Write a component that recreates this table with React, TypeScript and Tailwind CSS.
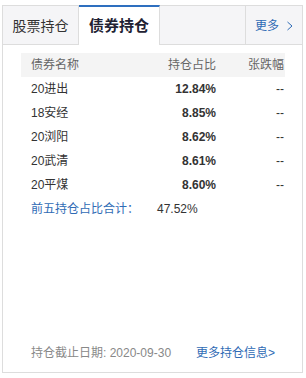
const rows = [
  { name: "20进出", ratio: "12.84%" },
  { name: "18安经", ratio: "8.85%" },
  { name: "20浏阳", ratio: "8.62%" },
  { name: "20武清", ratio: "8.61%" },
  { name: "20平煤", ratio: "8.60%" },
];

const font = {
  fontFamily: '"Liberation Sans", Arial, "Noto Sans CJK SC", sans-serif',
};

export default function App() {
  return (
    <div className="w-[306px] h-[378px] bg-white pt-[5px] pl-[2px]" style={font}>
      <div className="w-[301px] h-[368px] border border-[#dddddd] flex flex-col">
        {/* tabs */}
        <div className="flex h-[39px] shrink-0">
          <div className="w-[76px] bg-[#f5f5f7] border-r border-b border-[#dddddd] flex items-center justify-center pt-[2px] text-[14px] text-[#333333]">
            股票持仓
          </div>
          <div className="w-[81px] -mt-px bg-white border-t-2 border-t-[#2e6fbf] border-r border-r-[#dddddd] flex items-center justify-center text-[15px] font-bold text-[#222233]">
            债券持仓
          </div>
          <div className="w-[86px] bg-[#f5f5f7] border-r border-b border-[#dddddd]" />
          <div className="flex-1 bg-[#f5f5f7] border-b border-[#dddddd] flex items-center justify-center gap-[8px] pt-[1px] text-[12px] text-[#2f6bb5]">
            <span>更多</span>
            <svg width="6" height="10" viewBox="0 0 6 10" className="mt-px">
              <path d="M0.5 1 L5 5 L0.5 9" fill="none" stroke="#2f6bb5" strokeWidth="1" />
            </svg>
          </div>
        </div>

        {/* table */}
        <div className="ml-[18px] mt-[8px] w-[264px] text-[12px]">
          <div className="flex h-[24px] items-center bg-[#f4f4f4] text-[#666666]">
            <div className="w-[130px] pl-[10px]">债券名称</div>
            <div className="w-[65px] text-right">持仓占比</div>
            <div className="flex-1 text-right pr-px whitespace-nowrap overflow-hidden">张跌幅</div>
          </div>
          {rows.map((r) => (
            <div key={r.name} className="flex h-[24px] items-center text-[#333333]">
              <div className="w-[130px] pl-[10px]">{r.name}</div>
              <div className="w-[65px] text-right font-bold">{r.ratio}</div>
              <div className="flex-1 text-right pr-px">--</div>
            </div>
          ))}
          <div className="flex h-[24px] items-center">
            <div className="w-[136px] pl-[10px] text-[#2f6bb5]">前五持仓占比合计：</div>
            <div className="text-[#333333]">47.52%</div>
          </div>
        </div>

        {/* footer */}
        <div className="mt-auto pb-[11px] pl-[28px] flex items-center h-[27px] text-[12px]">
          <span className="text-[#888888]">持仓截止日期: 2020-09-30</span>
          <span className="ml-[25px] text-[#2f6bb5]">更多持仓信息&gt;</span>
        </div>
      </div>
    </div>
  );
}
